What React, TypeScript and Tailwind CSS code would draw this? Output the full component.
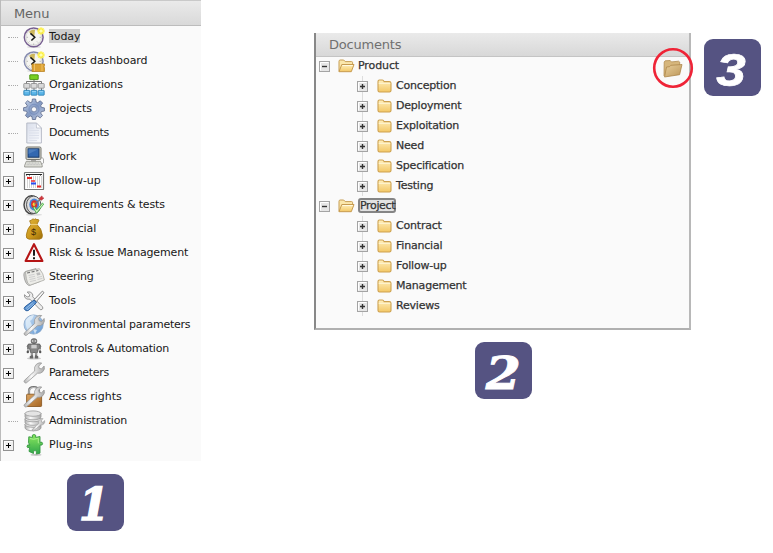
import React from "react";

const Svg = ({ children, size = 22 }: { children: React.ReactNode; size?: number }) => (
  <svg width={size} height={size} viewBox={`0 0 ${size} ${size}`} className="block shrink-0 overflow-visible">
    {children}
  </svg>
);

const Shades = () => (
  <svg width="0" height="0" className="absolute">
    <defs>
      <linearGradient id="steel" x1="0" y1="0" x2="1" y2="1"><stop offset="0" stopColor="#c7d3e8" /><stop offset=".5" stopColor="#8299c2" /><stop offset="1" stopColor="#c3cde2" /></linearGradient>
      <linearGradient id="silver" x1="0" y1="0" x2="1" y2="0"><stop offset="0" stopColor="#b0b0b0" /><stop offset=".35" stopColor="#fafafa" /><stop offset="1" stopColor="#a8a8a8" /></linearGradient>
      <linearGradient id="gold" x1="0" y1="0" x2="1" y2="1"><stop offset="0" stopColor="#e2b63b" /><stop offset=".6" stopColor="#c9951a" /><stop offset="1" stopColor="#9b6d08" /></linearGradient>
      <linearGradient id="fold" x1="0" y1="0" x2="0" y2="1"><stop offset="0" stopColor="#fff0bd" /><stop offset="1" stopColor="#f3c765" /></linearGradient>
      <linearGradient id="tan" x1="0" y1="0" x2="1" y2="1"><stop offset="0" stopColor="#e8ce9b" /><stop offset="1" stopColor="#bd9759" /></linearGradient>
      <linearGradient id="paper" x1="0" y1="0" x2="1" y2="1"><stop offset="0" stopColor="#d9deea" /><stop offset="1" stopColor="#fbfcff" /></linearGradient>
      <linearGradient id="globe" x1="0" y1="0" x2="1" y2="1"><stop offset="0" stopColor="#d5e6f8" /><stop offset="1" stopColor="#5b94d2" /></linearGradient>
      <linearGradient id="leather" x1="0" y1="0" x2="1" y2="1"><stop offset="0" stopColor="#dca663" /><stop offset="1" stopColor="#a66624" /></linearGradient>
      <linearGradient id="jigsaw" x1="0" y1="0" x2="0" y2="1"><stop offset="0" stopColor="#8be85d" /><stop offset="1" stopColor="#2fa64b" /></linearGradient>
    </defs>
  </svg>
);

const ClockFace = ({ ring }: { ring: string }) => (
  <>
    <ellipse cx="11" cy="21" rx="7" ry="1" fill="#ddd" />
    <circle cx="10.7" cy="11.3" r="9.4" fill="#f5f5f1" stroke={ring} strokeWidth="1.5" />
    <circle cx="10.7" cy="11.3" r="7.9" fill="none" stroke="#d8d8d6" strokeWidth="1" />
    <path d="M11.2 11.3L6 6Q8.5 3.2 12 4z" fill="#cdb75c" />
    <path d="M10.7 17.5V19M3.5 11.3H5M16.5 11.3H18M5.5 16.5l1-1M15 16.5l-1-1" stroke="#aaa" strokeWidth=".8" />
    <path d="M7.4 7.4l4.4 3.8-3.4 3.3" fill="none" stroke="#181818" strokeWidth="1.5" />
    <circle cx="18" cy="5" r="3.6" fill="#fff45b" opacity=".85" />
    <path d="M18 1.5v7M14.5 5h7M15.7 2.7l4.6 4.6M20.3 2.7l-4.6 4.6" stroke="#f9ea20" strokeWidth=".7" />
    <circle cx="18" cy="5" r="1.6" fill="#ffffb0" />
  </>
);

const wrench =
  "M1.6 20.4Q.6 19.4 1.4 18.4L11.7 9Q10.7 4.6 13.5 2.2 16 .2 18.7 1L15.7 4.1l.5 2.2 2.3.6 2.6-2.9q1.1 3.2-1.1 5.5-2.5 2.4-5.5 1.7L3.6 20.7Q2.6 21.4 1.6 20.4z";

const Wrench = () => <path d={wrench} fill="url(#silver)" stroke="#979797" strokeWidth=".8" />;

const icons: Record<string, React.ReactNode> = {
  today: <ClockFace ring="#775f91" />,
  tickets: (
    <>
      <ClockFace ring="#858baf" />
      <path d="M9 14h12.5v1.8q-1 1 0 2v3.7H9v-2q1-1 0-2z" fill="#dca132" stroke="#b67b19" strokeWidth=".7" />
      <path d="M11.5 14v7M19 14v7" stroke="#f3ca72" strokeWidth=".8" />
    </>
  ),
  organizations: (
    <>
      <path d="M11 5v3M3.5 10V7.5h15V10M11 7v9M3.5 12v5M18.5 12v5" fill="none" stroke="#777" />
      <rect x="6.8" y=".8" width="8.4" height="4.8" rx=".4" fill="#78cf21" stroke="#458e0b" strokeWidth=".9" />
      {[.8, 8, 15.2].map((x) => (
        <g key={x} strokeWidth=".8">
          <rect x={x} y="9.5" width="6" height="4.7" rx=".6" fill="#d9d9d9" stroke="#888" />
          <rect x={x} y="16.3" width="6" height="4.9" rx=".6" fill="#5ab5e8" stroke="#277bae" />
          <path d={`M${x + 1} 17.6h4`} stroke="#a7dbf6" />
        </g>
      ))}
    </>
  ),
  projects: (
    <>
      <path d="M9.4 1h3.2l.5 3 1.6.7 2.6-1.9 2.3 2.3-1.9 2.6.7 1.7 3 .5V13l-3 .5-.7 1.6 1.8 2.5-2.3 2.3-2.5-1.8-1.7.8-.5 2.6H9.4L9 18.7l-1.8-.8-2.5 1.8-2.3-2.2 1.8-2.6-.7-1.7-2.9-.4V9.7l3-.5.6-1.7-1.8-2.6 2.3-2.2L7.2 4.6 9 4z" fill="url(#steel)" stroke="#657394" strokeWidth=".9" />
      <circle cx="11" cy="11.3" r="5" fill="none" stroke="#758cbb" strokeWidth=".8" />
      <circle cx="11" cy="11.3" r="2.6" fill="#fafafa" stroke="#7584a7" strokeWidth=".9" />
    </>
  ),
  documents: (
    <>
      <path d="M3.8 1h9.6l5 5v15H3.8z" fill="url(#paper)" stroke="#b1b5c2" strokeWidth=".9" />
      <path d="M13.3 1l.2 5h4.9z" fill="#fff" stroke="#b6bac8" strokeWidth=".7" />
      <path d="M6 6h5M6 8.5h10M6 11h10M6 13.5h10M6 16h10M6 18.5h8" stroke="#dce0eb" />
    </>
  ),
  work: (
    <>
      <path d="M18.5 11q3 1 2 6-1.5 2-3.5 1" fill="none" stroke="#aaa" strokeWidth="1" />
      <rect x="3" y="1" width="15" height="12.5" rx="1.2" fill="#d7d7cf" stroke="#77776f" />
      <rect x="5" y="2.8" width="11" height="8.4" fill="#3268b0" stroke="#183866" />
      <path d="M5.5 3.3h9.7L5.5 8z" fill="#4b7dbe" />
      <path d="M8 14h5v2H8z" fill="#aaa" />
      <path d="M3.3 15.3h14.2l1.7 4.2v1.5H1.6v-1.5z" fill="#dedfd8" stroke="#898983" strokeWidth=".8" />
      <path d="M4.5 17h12M3.7 18.7h13.7" stroke="#bbb" strokeDasharray="1 .5" />
    </>
  ),
  follow: (
    <>
      <rect x="1.5" y="2.5" width="19" height="17" rx=".6" fill="#fff" stroke="#777" strokeWidth="1.2" />
      <path d="M3 4.5h16" stroke="#202020" strokeWidth="1" />
      <path d="M3.5 4v1.5M6.5 4v1.5M17.5 4v1.5" stroke="#202020" />
      <path d="M4.5 6v12M6.5 6v12M8.5 6v12M10.5 6v12M12.5 6v12M14.5 6v12M16.5 6v12M18.5 6v12" stroke="#c2c2c2" strokeWidth=".7" />
      <path d="M4 8h5M14 16.5h4" stroke="#e82a27" strokeWidth="1.8" />
      <path d="M8 11h4" stroke="#f24b4b" strokeWidth="1.8" />
      <path d="M8 13.5h5" stroke="#284df0" strokeWidth="2" />
    </>
  ),
  requirements: (
    <>
      <ellipse cx="11" cy="20.7" rx="8" ry="1.1" fill="#ddd" />
      <ellipse cx="8.6" cy="10.8" rx="7.6" ry="9.1" fill="#ddd" stroke="#444" strokeWidth="1.4" />
      <ellipse cx="10.7" cy="10.8" rx="7.2" ry="8.7" fill="#dedede" stroke="#555" strokeWidth="1" />
      <ellipse cx="11.2" cy="10.5" rx="4.9" ry="6.1" fill="#4b85d9" />
      <ellipse cx="11.2" cy="10.3" rx="3.1" ry="4" fill="#d9322d" />
      <ellipse cx="11" cy="10.2" rx="1.3" ry="1.8" fill="#ffd632" />
      <path d="M11.5 10.2l6-5" stroke="#777" strokeWidth="1.2" />
      <path d="M16 4.4l3-2.5.4 1.8 1.5.3-2.4 2.2z" fill="#d2343a" stroke="#b22b34" strokeWidth=".6" />
      <path d="M10 13.6l1.6-1 2.1 3.3L19.5 9l1.2 1.1-7 9.2z" fill="#c8f2b4" stroke="#38a43d" strokeWidth=".8" />
    </>
  ),
  financial: (
    <>
      <path d="M8.2 6.5L6.6 2.8q1.9-.3 2.6-1.5 1.2-.6 2.1.1 1.4-1.2 2.5.2 1.5-.6 2.2.6l-2.1 4.3q4.6 3.4 5.5 10.6.4 4-3.1 4.1H6.1q-3.3-.3-2.8-4.1.8-6.5 4.9-10.6z" fill="url(#gold)" stroke="#a27312" strokeWidth=".8" />
      <path d="M7.6 6.5h6.7" stroke="#ebcd79" strokeWidth="1.2" />
      <text x="10.6" y="17" fontSize="9" textAnchor="middle" fill="#3e2b08" className="font-['Liberation_Sans']">$</text>
    </>
  ),
  risk: (
    <>
      <path d="M11 2.2L19.4 19H2.6z" fill="#fffafa" stroke="#b51515" strokeWidth="2.1" strokeLinejoin="round" />
      <path d="M11 7.8v6M11 15.2v2" stroke="#111" strokeWidth="1.9" />
    </>
  ),
  steering: (
    <>
      <path d="M2.3 5.5L13 2.6l4.1 12.8-11 4.2Q1.8 18 .8 9q0-2.7 1.5-3.5z" fill="#ccccca" stroke="#989895" strokeWidth=".8" />
      <path d="M2.4 5.7l14-3Q20.5 7 21.4 14L7 19.2q-2.8-1-3.6-6.5z" fill="#ecece8" stroke="#aaa9a5" strokeWidth=".8" />
      <path d="M4 7l3-.6M8.5 6l3-.6M13 5l2.4-.5" stroke="#767676" strokeWidth="1.2" />
      <path d="M5.5 9.5l6-1.2M6 11.5l6-1.2M6.5 13.5l6-1.2M7 15.5l6-1.2M14 11.5l5-1.2M14.5 13.5l5-1.2" stroke="#ccc" strokeWidth=".9" />
      <path d="M13.3 7l3.4-.7.9 2.4-3.5.7z" fill="#bbb" />
    </>
  ),
  tools: (
    <>
      <path d="M1.5 4.7L4 7l2.3-.5.4-2L4.2 2q3.3-.8 5 1.5 1 1.5.5 3.3l9.6 9.8q1.3 1.6-.1 2.7t-2.6-.2L7 9.2Q3.4 9.8 1.9 7.5 1.2 6 1.5 4.7z" fill="#ededed" stroke="#808080" strokeWidth=".8" />
      <path d="M19.4 1.1l1.6 1.5-7.7 9-2.1-2z" fill="#f6f6f6" stroke="#666" strokeWidth=".8" />
      <path d="M11 10l2.5 2.4-7.8 7.8Q4 21.6 2.1 20T2 16.8z" fill="#5d94d2" stroke="#285d9d" />
      <path d="M9.9 12.6l-7 6M11 14l-7 6" stroke="#a3c6e9" strokeWidth=".8" />
    </>
  ),
  environment: (
    <>
      <circle cx="10.6" cy="10.5" r="9.6" fill="url(#globe)" stroke="#86a5c7" strokeWidth=".8" />
      <path d="M3 6q4-5 8-5-1 4-4 6l2 4-3 7Q2 14 3 6M10 15l4 1-2 4" fill="#eaf4fb" opacity=".7" />
      <g transform="translate(0 .5)"><Wrench /></g>
    </>
  ),
  controls: (
    <>
      <ellipse cx="11" cy="20.4" rx="7" ry="1.2" fill="#ccc" />
      <rect x="8.3" y=".8" width="5.4" height="4.6" rx="1.8" fill="#888" stroke="#555" strokeWidth=".8" />
      <path d="M9 3h1.2M11.8 3H13" stroke="#fff" />
      <path d="M5.4 6h11.2l1.4 3-2.5 1.5-1.1 4H7.6l-1.1-4L4 9z" fill="#858585" stroke="#4c4c4c" strokeWidth=".7" />
      <path d="M8.3 6.8h5.4v3.6H8.3z" fill="#ccc" />
      <path d="M5 7v6.5M17 7v6.5" stroke="#777" strokeWidth="1.8" strokeDasharray="2 .6" />
      <circle cx="4.8" cy="14" r="1.2" fill="#555" /><circle cx="17.2" cy="14" r="1.2" fill="#555" />
      <path d="M8.9 14v4.5M13.1 14v4.5" stroke="#777" strokeWidth="2.4" strokeDasharray="1.8 .5" />
      <path d="M6.8 18h3.4v2.5H6.8M11.8 18h3.4v2.5h-3.4" fill="#666" />
    </>
  ),
  parameters: <Wrench />,
  access: (
    <>
      <path d="M6 9V5q0-4 4.7-4T16 5v4" fill="none" stroke="#707070" strokeWidth="2.2" />
      <path d="M6 9V5q0-3.4 4.7-3.4T16 5v4" fill="none" stroke="#ddd" strokeWidth=".8" />
      <rect x="3.6" y="8.2" width="15" height="12.3" rx=".8" fill="url(#leather)" stroke="#845019" strokeWidth=".8" />
      <Wrench />
    </>
  ),
  administration: (
    <>
      {[14, 8.5, 3].map((y) => (
        <g key={y} stroke="#999" strokeWidth=".8">
          <path d={`M2 ${y}v4q1 2.8 8 2.8t8-2.8V${y}`} fill="url(#silver)" />
          <ellipse cx="10" cy={y + 0.6} rx="8" ry="2.7" fill="#e4e4e4" />
        </g>
      ))}
      <g transform="translate(8.5 8) scale(.62)"><Wrench /></g>
    </>
  ),
  plugins: (
    <>
      <ellipse cx="13" cy="20.8" rx="5.5" ry=".9" fill="#bbb" />
      <path d="M5.8 2.8l3.8.6Q8.3.6 11 .5q2.5 0 1.7 2.9l4.3-.9v5.8q2.6-.8 2.6 1.3t-2.6 1.4v8.2l-3.7.8q1-3.5-1.3-3.5t-1.5 3l-4.5-2.1.7-4.2Q4 14.5 4 12.3t3-1.2L5.5 8.8z" fill="url(#jigsaw)" stroke="#379743" strokeWidth=".9" />
      <path d="M7 4.5l3.5.8 4.8-1v5" stroke="#b6f79b" fill="none" strokeWidth=".8" />
    </>
  ),
};

const menu: [string, string, boolean, string][] = [
  ["Today", "today", false, "tracking-[-0.1px]"],
  ["Tickets dashboard", "tickets", false, "tracking-[-0.09px]"],
  ["Organizations", "organizations", false, "tracking-[-0.18px]"],
  ["Projects", "projects", false, "tracking-[-0.06px]"],
  ["Documents", "documents", false, "tracking-[-0.3px]"],
  ["Work", "work", true, "tracking-[-0.1px]"],
  ["Follow-up", "follow", true, "tracking-[-0.1px]"],
  ["Requirements & tests", "requirements", true, "tracking-[-0.16px]"],
  ["Financial", "financial", true, "tracking-[-0.12px]"],
  ["Risk & Issue Management", "risk", true, "tracking-[-0.16px]"],
  ["Steering", "steering", true, "tracking-[-0.22px]"],
  ["Tools", "tools", true, ""],
  ["Environmental parameters", "environment", true, "tracking-[-0.25px]"],
  ["Controls & Automation", "controls", true, "tracking-[-0.25px]"],
  ["Parameters", "parameters", true, "tracking-[-0.3px]"],
  ["Access rights", "access", true, ""],
  ["Administration", "administration", false, "tracking-[-0.18px]"],
  ["Plug-ins", "plugins", true, ""],
];

const Toggle = ({ minus = false, soft = false }: { minus?: boolean; soft?: boolean }) => (
  <svg width="11" height="11" viewBox="0 0 11 11" className="block shrink-0">
    <rect x=".5" y=".5" width="10" height="10" fill={soft ? "#e6e6e6" : "#f0f0f0"} stroke={soft ? "#a4a4a4" : "#919191"} />
    <path d="M1.5 9.5V1.5h8" fill="none" stroke="#fff" />
    <path d={minus ? "M3 5.5h5" : "M3 5.5h5M5.5 3v5"} stroke={soft ? "#333" : "#000"} strokeWidth={soft ? 1.4 : 1} />
  </svg>
);

const OpenFolder = () => (
  <svg width="17" height="14" viewBox="0 0 17 14" className="block shrink-0">
    <path d="M1 12.5V2.3Q1 1 2.2 1h3.5l1.5 1.6h6.4q1 0 1 1V6" fill="#fbe7ac" stroke="#c79e55" />
    <path d="M3.8 5.5h12.2l-2.7 7.2H1z" fill="url(#fold)" stroke="#c79b50" strokeLinejoin="round" />
    <path d="M4.5 6.5h10.2" stroke="#fff9df" />
  </svg>
);

const Folder = () => (
  <svg width="15" height="14" viewBox="0 0 15 14" className="block shrink-0">
    <path d="M1 11.4V2.4Q1 1 2.4 1h2.9q1.2 0 1.8 1.6h5.1q1.8 0 1.8 1.7v7.1q0 1.6-1.6 1.6H2.6Q1 13 1 11.4z" fill="url(#fold)" stroke="#cda150" strokeWidth="1.1" />
    <path d="M1.7 4.3h11.5" stroke="#fff5d4" />
  </svg>
);

const digits: Record<string, { x: number; y: number; size: number; width: number; stroke: number; family: string }> = {
  "1": { x: 27, y: 46.3, size: 44, width: 30, stroke: 1.5, family: "font-['DejaVu_Serif']" },
  "2": { x: 28.3, y: 47, size: 45, width: 35, stroke: 0.9, family: "font-['DejaVu_Serif']" },
  "3": { x: 27, y: 47, size: 47, width: 29.5, stroke: 0.7, family: "font-['Liberation_Sans']" },
};

const NumberBadge = ({ n }: { n: string }) => {
  const d = digits[n];
  return (
    <div className="h-[57px] w-[57px] shrink-0 overflow-hidden rounded-[9px] bg-[#555382]">
      <svg width="57" height="57" viewBox="0 0 57 57">
        <text x={d.x - d.width / 2} y={d.y} textLength={d.width} lengthAdjust="spacingAndGlyphs" fill="#fff" stroke="#fff" strokeWidth={d.stroke} fontSize={d.size} className={`${d.family} font-bold italic`}>{n}</text>
      </svg>
    </div>
  );
};

const Branch = ({ title, items, selected = false }: { title: string; items: string[]; selected?: boolean }) => (
  <div>
    <div className="flex h-5 items-center">
      <div className="mt-px ml-[3px]"><Toggle minus soft /></div>
      <div className="ml-[8px]"><OpenFolder /></div>
      <span className={selected ? "mb-[2px] ml-[3px] h-[15px] w-[38px] rounded-[3px] border-2 border-[#858585] bg-[#e2e2e2] text-[11px] leading-[11px] tracking-[-0.35px] whitespace-nowrap" : "mb-[2px] ml-[3px] text-[11px] leading-[15px] tracking-[-0.1px]"}>{title}</span>
    </div>
    {items.map((name) => (
      <div key={name} className="flex h-5 items-center">
        <div className="ml-[41px] flex h-5 w-[11px] flex-col items-center">
          <div className="h-[5px] border-l border-dashed border-[#ddd]" />
          <Toggle soft />
          <div className="h-[4px] border-l border-dashed border-[#ddd]" />
        </div>
        <div className="ml-[9px]"><Folder /></div>
        <span className="ml-[4px] text-[11px] leading-[18px] tracking-[-0.2px]">{name}</span>
      </div>
    ))}
  </div>
);

export default function App() {
  return (
    <div className="flex h-[553px] w-[773px] items-start overflow-hidden bg-white font-['DejaVu_Sans',sans-serif] text-[#171717]">
      <Shades />
      <aside className="w-[201px] shrink-0">
        <div className="h-[461px] border-l border-[#bbb] bg-[#fafafa]">
          <div className="h-[26px] border-t border-b border-t-[#c9c9c9] border-b-[#bcbcbc] bg-linear-to-b from-[#eaeaea] to-[#d9d9d9] pl-[13px] text-[13px] leading-[25px] tracking-[-0.1px] text-[#656565]">Menu</div>
          {menu.map(([label, icon, open, tracking]) => (
            <div key={icon} className="flex h-6 items-start">
              <div className="flex h-[22px] w-[22px] items-center pl-[2px]">
                {open ? <div className="pt-px"><Toggle /></div> : <div className="ml-[5px] w-[10px] border-t border-dotted border-[#aaa]" />}
              </div>
              <Svg>{icons[icon]}</Svg>
              <div className="ml-1 pt-[3px]"><span className={`block h-[14px] text-[11px] leading-[16px] whitespace-nowrap ${tracking} ${icon === "today" ? "bg-[#cecece]" : ""}`}>{label}</span></div>
            </div>
          ))}
        </div>
        <div className="mt-[13px] ml-[67px]"><NumberBadge n="1" /></div>
      </aside>
      <main className="mt-[33px] ml-[113px] w-[377px] shrink-0">
        <section className="h-[297px] border-r-2 border-b-2 border-l-2 border-r-[#b8b8b8] border-b-[#b0b0b0] border-l-[#888] bg-[#fafafa]">
          <div className="h-[24px] border-b border-[#c4c4c4] bg-linear-to-b from-[#eaeaea] to-[#d8d8d8] pl-[13px] text-[13px] leading-[24px] tracking-[-0.2px] text-[#707070]">Documents</div>
          <div className="flex justify-between text-[#333] [-webkit-text-stroke:0.25px_#333]">
            <div className="-mt-px">
              <Branch title="Product" items={["Conception", "Deployment", "Exploitation", "Need", "Specification", "Testing"]} />
              <Branch title="Project" selected items={["Contract", "Financial", "Follow-up", "Management", "Reviews"]} />
            </div>
            <svg width="42" height="42" viewBox="0 0 42 42" className="-mt-[10px] -mr-[5px] block overflow-visible">
              <circle cx="21" cy="21" r="18.8" fill="none" stroke="#ef2437" strokeWidth="2.6" />
              <path d="M12 29l.2-14 1-1.2 5-.3 1.3 1.4 7.1-.7 1.2 1-.3 3" fill="#d6b67c" stroke="#b38d50" strokeWidth=".8" />
              <path d="M14.5 20l3-.3 1.3-1.4 11.2-.8-2.4 10.2L12.5 30z" fill="url(#tan)" stroke="#ad864a" strokeWidth=".8" />
            </svg>
          </div>
        </section>
        <div className="mt-[12px] ml-[161px]"><NumberBadge n="2" /></div>
      </main>
      <div className="mt-[39px] ml-[13px]"><NumberBadge n="3" /></div>
    </div>
  );
}
